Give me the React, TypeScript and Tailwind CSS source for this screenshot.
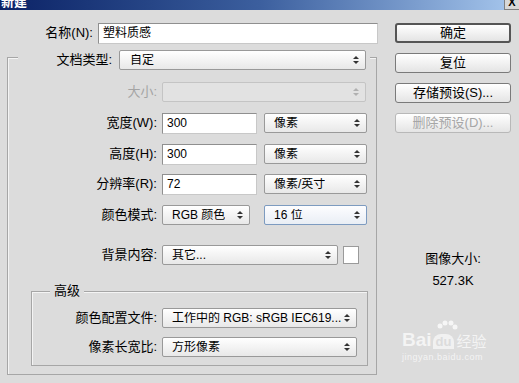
import React from "react";

const font = "font-['Liberation_Sans','Noto_Sans_CJK_SC',sans-serif]";

function Arrows({ dim }: { dim?: boolean }) {
  return (
    <svg width="6" height="10" viewBox="0 0 6 10" className="shrink-0">
      <polygon points="0,4 3,1 6,4" fill={dim ? "#b0b0b0" : "#333"} />
      <polygon points="0,6 3,9 6,6" fill={dim ? "#b0b0b0" : "#333"} />
    </svg>
  );
}

function Select({
  text,
  w,
  pl = "pl-[9px]",
  disabled,
  focused,
}: {
  text?: string;
  w: string;
  pl?: string;
  disabled?: boolean;
  focused?: boolean;
}) {
  const tone = disabled
    ? "border-[#c4c4c4] bg-[#e2e2e2]"
    : focused
      ? "border-[#7d9bc0] bg-gradient-to-b from-[#fdfdff] to-[#e9eef5]"
      : "border-[#999] bg-gradient-to-b from-[#ffffff] to-[#e8e8e8]";
  return (
    <div
      className={`${w} h-[20px] ${pl} pr-[6px] flex items-center justify-between rounded-[2px] border text-[12px] ${tone}`}
    >
      <span className="whitespace-nowrap overflow-hidden leading-none">{text}</span>
      <Arrows dim={disabled} />
    </div>
  );
}

function Input({ value, w }: { value: string; w: string }) {
  return (
    <div
      className={`${w} h-[21px] pl-[4px] flex items-center bg-white text-[12px] border border-[#8f8f8f] border-b-[#c8c8c8] border-r-[#c8c8c8]`}
    >
      {value}
    </div>
  );
}

function Button({
  label,
  primary,
  disabled,
}: {
  label: string;
  primary?: boolean;
  disabled?: boolean;
}) {
  const tone = primary
    ? "border-2 border-[#555]"
    : disabled
      ? "border border-[#b8b8b8] text-[#a6a6a6]"
      : "border border-[#7a7a7a]";
  return (
    <div
      className={`w-[116px] h-[20px] flex items-center justify-center rounded-[3px] bg-gradient-to-b from-[#ffffff] to-[#e4e4e4] ${tone}`}
    >
      {label}
    </div>
  );
}

function Row({
  label,
  labelW,
  dim,
  className = "",
  children,
}: {
  label: string;
  labelW: string;
  dim?: boolean;
  className?: string;
  children: React.ReactNode;
}) {
  return (
    <div className={`flex items-center h-[20px] ${className}`}>
      <div className={`${labelW} pr-[3px] text-right shrink-0 whitespace-nowrap ${dim ? "text-[#a4a4a4]" : ""}`}>{label}</div>
      <div className="flex items-center ml-[2px]">{children}</div>
    </div>
  );
}

export default function App() {
  return (
    <div
      className={`relative w-[519px] h-[383px] overflow-hidden bg-[#dcdcdc] text-[13px] text-black ${font}`}
    >
      {/* title bar */}
      <div className="h-[10px] flex justify-between bg-gradient-to-r from-[#0c2266] via-[#3c5f9e] to-[#a8c8ee] overflow-hidden">
        <span className="text-white font-bold text-[13px] leading-none -mt-[5px] ml-[1px]">新建</span>
        <div className="w-[15px] h-[10px] bg-[#d8d8d8] border-l border-b border-[#808080] flex justify-center overflow-hidden">
          <span className="text-[11px] font-bold leading-none -mt-[3px]">X</span>
        </div>
      </div>

      <div className="flex">
        {/* left column */}
        <div className="w-[385px] shrink-0">
          <div className="flex items-center h-[20px] mt-[13px]">
            <div className="w-[95px] pr-[2px] text-right">名称(N):</div>
            <div className="ml-[3px]">
              <Input value="塑料质感" w="w-[280px]" />
            </div>
          </div>

          <div className="ml-[7px] mt-[14px] w-[370px] h-[318px] border border-[#a6a6a6] shadow-[inset_1px_1px_0_#f4f4f4]">
            <div className="flex items-center h-[20px] -mt-[8px] ml-[10px] w-[352px] bg-[#dcdcdc]">
              <div className="w-[97px] pr-[3px] text-right shrink-0">文档类型:</div>
              <div className="ml-[4px]">
                <Select text="自定" w="w-[247px]" pl="pl-[10px]" />
              </div>
            </div>

            <Row label="大小:" labelW="w-[152px]" dim className="mt-[12px]">
              <Select w="w-[204px]" disabled />
            </Row>
            <Row label="宽度(W):" labelW="w-[152px]" className="mt-[11px]">
              <Input value="300" w="w-[95px]" />
              <div className="ml-[7px]">
                <Select text="像素" w="w-[103px]" />
              </div>
            </Row>
            <Row label="高度(H):" labelW="w-[152px]" className="mt-[11px]">
              <Input value="300" w="w-[95px]" />
              <div className="ml-[7px]">
                <Select text="像素" w="w-[103px]" />
              </div>
            </Row>
            <Row label="分辨率(R):" labelW="w-[152px]" className="mt-[10px]">
              <Input value="72" w="w-[95px]" />
              <div className="ml-[7px]">
                <Select text="像素/英寸" w="w-[103px]" />
              </div>
            </Row>
            <Row label="颜色模式:" labelW="w-[152px]" className="mt-[11px]">
              <Select text="RGB 颜色" w="w-[88px]" />
              <div className="ml-[14px]">
                <Select text="16 位" w="w-[103px]" focused />
              </div>
            </Row>
            <Row label="背景内容:" labelW="w-[152px]" className="mt-[20px]">
              <Select text="其它..." w="w-[176px]" />
              <div className="ml-[5px] w-[16px] h-[18px] bg-white border border-[#9a9a9a]" />
            </Row>

            {/* advanced group */}
            <div className="relative ml-[23px] mt-[26px] w-[337px] h-[75px] border border-[#a6a6a6] shadow-[inset_1px_1px_0_#f4f4f4]">
              <div className="absolute -top-[9px] left-[18px] px-[4px] bg-[#dcdcdc] leading-[16px]">高级</div>
              <Row label="颜色配置文件:" labelW="w-[128px]" className="mt-[16px]">
                <Select text="工作中的 RGB: sRGB IEC619..." w="w-[195px]" />
              </Row>
              <Row label="像素长宽比:" labelW="w-[128px]" className="mt-[9px]">
                <Select text="方形像素" w="w-[195px]" />
              </Row>
            </div>
          </div>
        </div>

        {/* right column */}
        <div className="flex flex-col pl-[10px] pt-[13px] gap-[10px]">
          <Button label="确定" primary />
          <Button label="复位" />
          <Button label="存储预设(S)..." />
          <Button label="删除预设(D)..." disabled />
          <div className="w-[116px] text-center mt-[108px] leading-[16px]">图像大小:</div>
          <div className="w-[116px] text-center -mt-[4px] leading-[16px]">527.3K</div>
        </div>
      </div>

      {/* watermark */}
      <div className="absolute left-[402px] top-[330px] text-white/70 pointer-events-none">
        <div className="flex items-end">
          <span className="text-[19px] font-bold leading-none">Bai</span>
          <div className="relative ml-[1px]">
            <svg width="28" height="14" viewBox="0 0 28 14" className="absolute -top-[14px] left-0">
              <circle cx="7" cy="6" r="2.5" fill="rgba(255,255,255,0.75)" />
              <circle cx="12" cy="3" r="2.5" fill="rgba(255,255,255,0.75)" />
              <circle cx="18" cy="3" r="2.5" fill="rgba(255,255,255,0.75)" />
              <circle cx="22" cy="7" r="2.5" fill="rgba(255,255,255,0.75)" />
            </svg>
            <div className="px-[3px] rounded-t-[8px] bg-white/60 text-[#dcdcdc] text-[13px] font-bold leading-[15px]">du</div>
          </div>
          <span className="ml-[2px] text-[15px] leading-none">经验</span>
        </div>
        <div className="text-[9px] tracking-[0.5px] leading-[12px] mt-[2px]">jingyan.baidu.com</div>
      </div>
    </div>
  );
}
